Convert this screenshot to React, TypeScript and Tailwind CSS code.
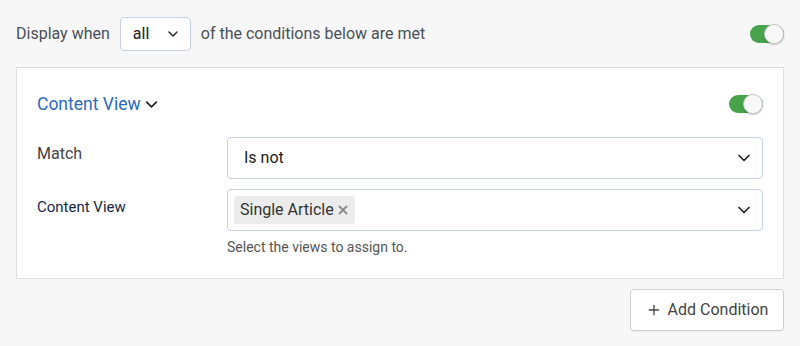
import { ChevronDown, Plus, X } from "lucide-react";

function Toggle() {
  return (
    <div className="relative h-[18px] w-[34px] rounded-full bg-[#46a34a]">
      <div className="absolute right-0 top-[-1px] h-[20px] w-[20px] rounded-full border border-[#c9c9c9] bg-[#f8f8f8] shadow-[0_1px_2px_rgba(0,0,0,0.25)]" />
    </div>
  );
}

export default function App() {
  return (
    <div className="min-h-[346px] w-[800px] bg-[#f7f7f7] font-['Roboto',sans-serif] text-[#495057]">
      <div className="flex h-[67px] items-center px-4">
        <div className="flex items-center gap-[10px] text-[16px]">
          <span>Display when</span>
          <div className="flex h-[34px] w-[71px] items-center justify-between rounded-[4px] border border-[#c4d2e3] bg-white pl-3 pr-[9px] text-[#222]">
            <span>all</span>
            <ChevronDown size={16} strokeWidth={2.4} className="text-[#333]" />
          </div>
          <span>of the conditions below are met</span>
        </div>
        <div className="ml-auto">
          <Toggle />
        </div>
      </div>

      <div className="mx-4 h-[212px] border border-[#dedede] bg-white px-5 pt-[23px]">
        <div className="flex items-center">
          <div className="flex items-center gap-[1px] text-[17.5px] text-[#2a6bc0]">
            <span>Content View</span>
            <ChevronDown size={19} strokeWidth={2.2} className="text-[#222]" />
          </div>
          <div className="ml-auto">
            <Toggle />
          </div>
        </div>

        <div className="mt-[20px] flex items-center">
          <div className="w-[190px] pb-[9px] text-[16px] text-[#444]">Match</div>
          <div className="flex h-[42px] flex-1 items-center justify-between rounded-[4px] border border-[#c4d2e3] pl-4 pr-[8px] text-[16px] text-[#222]">
            <span>Is not</span>
            <ChevronDown size={20} strokeWidth={2} className="text-[#222]" />
          </div>
        </div>

        <div className="mt-[10px] flex">
          <div className="w-[190px] pt-[7px] text-[15px] text-[#17284a]">Content View</div>
          <div className="flex-1">
            <div className="flex h-[42px] items-center justify-between rounded-[4px] border border-[#c4d2e3] pl-[6px] pr-[8px]">
              <div className="flex h-[28px] items-center gap-[2px] rounded-[3px] bg-[#ececec] pl-[6px] pr-[5px] text-[16px] text-[#333]">
                <span>Single Article</span>
                <X size={14} strokeWidth={3.4} className="text-[#8f8f8f]" />
              </div>
              <ChevronDown size={20} strokeWidth={2} className="text-[#222]" />
            </div>
            <div className="mt-[6px] text-[14px] text-[#555]">Select the views to assign to.</div>
          </div>
        </div>
      </div>

      <div className="flex justify-end px-4 pt-[10px]">
        <div className="flex h-[42px] w-[154px] items-center justify-center gap-[6px] rounded-[4px] border border-[#cfcfcf] bg-white text-[16px] text-[#444] shadow-[0_1px_1px_rgba(0,0,0,0.05)]">
          <Plus size={16} strokeWidth={2} />
          <span>Add Condition</span>
        </div>
      </div>
    </div>
  );
}
